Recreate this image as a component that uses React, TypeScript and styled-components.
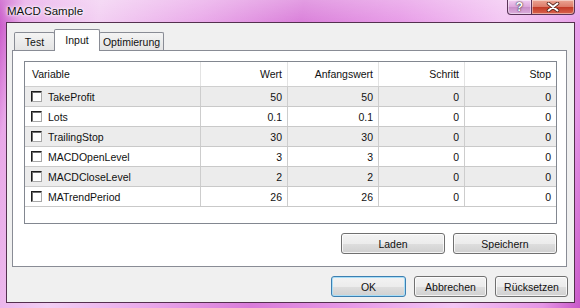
import styled, { createGlobalStyle } from 'styled-components';

const GlobalStyle = createGlobalStyle`
  html, body {
    margin: 0;
    padding: 0;
    background: #d060d0;
  }
  body {
    font-family: "Liberation Sans", Arial, sans-serif;
    font-size: 10.5px;
    color: #111;
  }
`;

const Window = styled.div`
  width: 580px;
  height: 308px;
  box-sizing: border-box;
  display: flex;
  flex-direction: column;
  background:
    linear-gradient(to bottom, rgba(255, 255, 255, 0.25), rgba(255, 255, 255, 0) 26px),
    linear-gradient(100deg, #c44cc4 0%, #e8a8e8 4%, #f2cef2 16%, #e9a8e9 32%, #d97cd9 48%,
      #e79ae7 64%, #f3c6f3 80%, #e596e5 94%, #c858c8 100%);
`;

const TitleBar = styled.div`
  height: 22px;
  display: flex;
  align-items: flex-start;
`;

const Title = styled.div`
  padding: 4px 0 0 7px;
  font-size: 11.5px;
  line-height: 14px;
  color: #101010;
  text-shadow: 0 0 6px #fff, 0 0 3px #fff, 0 0 2px #fff;
`;

const CaptionButtons = styled.div`
  margin-left: auto;
  margin-right: 5px;
  display: flex;
`;

const CaptionButton = styled.div<{ $kind: 'help' | 'close' }>`
  box-sizing: border-box;
  height: 15px;
  width: ${(p) => (p.$kind === 'help' ? '25px' : '43px')};
  border: 1px solid #5a3458;
  border-top: none;
  border-left: ${(p) => (p.$kind === 'help' ? '1px solid #5a3458' : 'none')};
  border-radius: ${(p) => (p.$kind === 'help' ? '0 0 0 4px' : '0 0 4px 0')};
  background: ${(p) =>
    p.$kind === 'help'
      ? 'linear-gradient(#f2cef2, #dba6db 50%, #c98ec9 51%, #dcaedc)'
      : 'linear-gradient(#eba594, #dc7a68 50%, #c23a26 51%, #d9634f)'};
  box-shadow: inset 0 0 0 1px rgba(255, 255, 255, 0.45);
  display: flex;
  align-items: center;
  justify-content: center;
  color: #fff;
  font-weight: bold;
  font-size: 12px;
  line-height: 12px;
  text-shadow: 0 0 1px #333, 0 0 2px #333;
`;

const Client = styled.div`
  flex: 1;
  margin: 0 5px 5px 6px;
  border: 1px solid #54304f;
  background: #f0f0f0;
  display: flex;
  flex-direction: column;
  padding: 6px 7px 5px 5px;
`;

const TabStrip = styled.div`
  height: 21px;
  display: flex;
  align-items: flex-end;
  padding-left: 2px;
  position: relative;
  z-index: 1;
`;

const Tab = styled.div<{ $active?: boolean; $w: number }>`
  box-sizing: border-box;
  width: ${(p) => p.$w}px;
  height: ${(p) => (p.$active ? 22 : 18)}px;
  margin-bottom: ${(p) => (p.$active ? -1 : 0)}px;
  margin-right: -1px;
  border: 1px solid #898c95;
  border-bottom: none;
  border-radius: 2px 2px 0 0;
  background: ${(p) => (p.$active ? '#fff' : 'linear-gradient(#f4f4f4, #e4e4e4)')};
  display: flex;
  justify-content: center;
  padding-top: ${(p) => (p.$active ? 4 : 3)}px;
  line-height: 13px;
  white-space: nowrap;
`;

const Panel = styled.div`
  height: 217px;
  box-sizing: border-box;
  border: 1px solid #898c95;
  background: #fff;
  padding: 10px 9px 0 11px;
  display: flex;
  flex-direction: column;
`;

const List = styled.div`
  height: 163px;
  box-sizing: border-box;
  border: 1px solid #828790;
  background: #fff;
`;

const GridRow = styled.div<{ $head?: boolean; $shade?: boolean }>`
  display: grid;
  grid-template-columns: 176px 87px 91px 86px 91px;
  height: ${(p) => (p.$head ? 25 : 20)}px;
  box-sizing: border-box;
  border-bottom: 1px solid ${(p) => (p.$head ? '#cfcfcf' : '#c9c9c9')};
  background: ${(p) => (p.$shade ? '#ececec' : '#fff')};
`;

const Cell = styled.div<{ $head?: boolean; $left?: boolean }>`
  display: flex;
  align-items: center;
  justify-content: ${(p) => (p.$left ? 'flex-start' : 'flex-end')};
  padding: ${(p) => (p.$left ? (p.$head ? '0 0 0 7px' : '0 0 0 6px') : '0 5px 0 0')};
  border-right: 1px solid ${(p) => (p.$head ? '#e3e3e3' : '#cdcdcd')};
  white-space: nowrap;
  &:last-child {
    border-right: none;
  }
`;

const Check = styled.span`
  width: 11px;
  height: 11px;
  box-sizing: border-box;
  border: 1px solid;
  border-color: #1e1e1e #a8a8a8 #a8a8a8 #1e1e1e;
  box-shadow: inset 1px 1px 0 #707070;
  background: #fff;
  margin-right: 6px;
  flex: none;
`;

const ButtonRow = styled.div<{ $gap: number }>`
  display: flex;
  justify-content: flex-end;
  gap: ${(p) => p.$gap}px;
`;

const Button = styled.div<{ $w: number; $default?: boolean }>`
  box-sizing: border-box;
  width: ${(p) => p.$w}px;
  height: 21px;
  border: 1px solid ${(p) => (p.$default ? '#3c7fb1' : '#707070')};
  border-radius: 3px;
  background: linear-gradient(#f3f3f3, #ececec 50%, #dedede 51%, #d0d0d0);
  box-shadow: inset 0 0 0 1px ${(p) => (p.$default ? '#a9def7' : 'rgba(255,255,255,0.75)')};
  display: flex;
  align-items: center;
  justify-content: center;
  color: #111;
`;

const rows = [
  { name: 'TakeProfit', v: ['50', '50', '0', '0'] },
  { name: 'Lots', v: ['0.1', '0.1', '0', '0'] },
  { name: 'TrailingStop', v: ['30', '30', '0', '0'] },
  { name: 'MACDOpenLevel', v: ['3', '3', '0', '0'] },
  { name: 'MACDCloseLevel', v: ['2', '2', '0', '0'] },
  { name: 'MATrendPeriod', v: ['26', '26', '0', '0'] },
];

const CloseGlyph = () => (
  <svg width="14" height="10" viewBox="0 0 14 10">
    <path d="M2.5 1.5 L11.5 8.5 M11.5 1.5 L2.5 8.5" stroke="#5a2a20" strokeWidth="3.6" strokeLinecap="round" />
    <path d="M2.5 1.5 L11.5 8.5 M11.5 1.5 L2.5 8.5" stroke="#fff" strokeWidth="2" strokeLinecap="round" />
  </svg>
);

export default function App() {
  return (
    <>
      <GlobalStyle />
      <Window>
        <TitleBar>
          <Title>MACD Sample</Title>
          <CaptionButtons>
            <CaptionButton $kind="help">?</CaptionButton>
            <CaptionButton $kind="close">
              <CloseGlyph />
            </CaptionButton>
          </CaptionButtons>
        </TitleBar>
        <Client>
          <TabStrip>
            <Tab $w={41}>Test</Tab>
            <Tab $w={46} $active>
              Input
            </Tab>
            <Tab $w={65}>Optimierung</Tab>
          </TabStrip>
          <Panel>
            <List>
              <GridRow $head>
                <Cell $head $left>
                  Variable
                </Cell>
                <Cell $head>Wert</Cell>
                <Cell $head>Anfangswert</Cell>
                <Cell $head>Schritt</Cell>
                <Cell $head>Stop</Cell>
              </GridRow>
              {rows.map((r, i) => (
                <GridRow key={r.name} $shade={i % 2 === 0}>
                  <Cell $left>
                    <Check />
                    {r.name}
                  </Cell>
                  {r.v.map((x, j) => (
                    <Cell key={j}>{x}</Cell>
                  ))}
                </GridRow>
              ))}
            </List>
            <ButtonRow $gap={8} style={{ marginTop: 9 }}>
              <Button $w={104}>Laden</Button>
              <Button $w={104}>Speichern</Button>
            </ButtonRow>
          </Panel>
          <ButtonRow $gap={8} style={{ marginTop: 9, marginRight: -1 }}>
            <Button $w={75} $default>
              OK
            </Button>
            <Button $w={73}>Abbrechen</Button>
            <Button $w={73}>Rücksetzen</Button>
          </ButtonRow>
        </Client>
      </Window>
    </>
  );
}
